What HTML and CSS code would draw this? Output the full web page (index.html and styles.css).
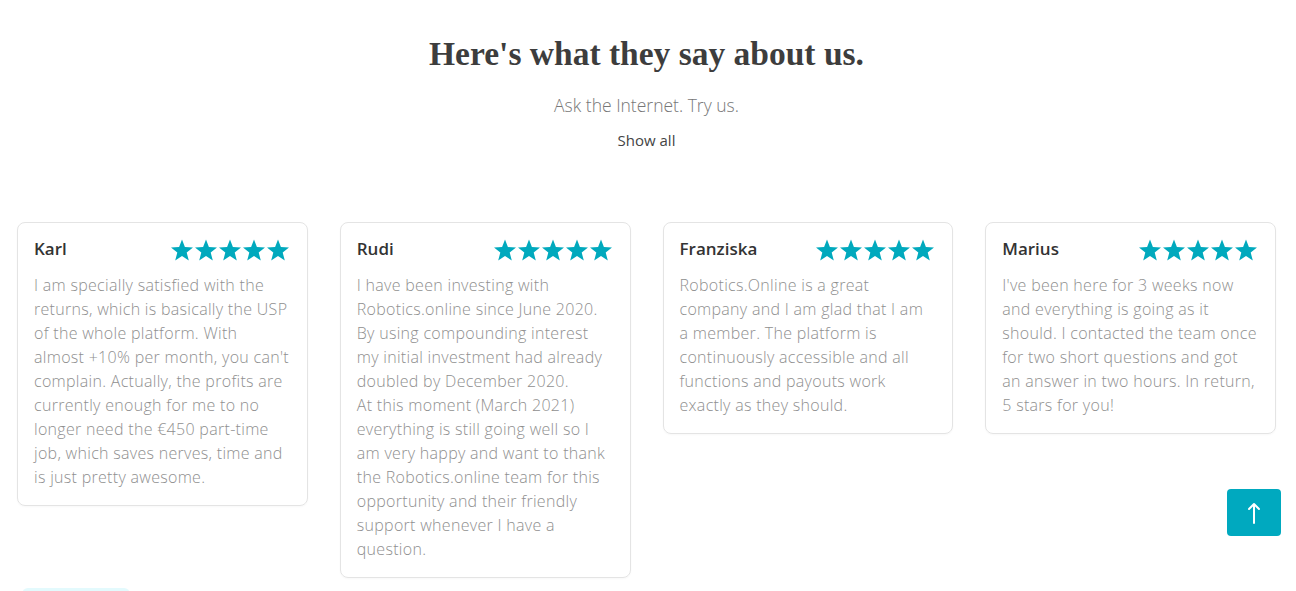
FILE: index.html
```html
<!DOCTYPE html>
<html lang="en">
  <head>
    <meta charset="UTF-8" />
    <meta name="viewport" content="width=device-width, initial-scale=1.0" />
    <title>Testimonials</title>
    <link rel="stylesheet" href="styles.css">
  </head>
  <body>
    <section class="reviews">
      <h2 class="reviews-title">Here's what they say about us.</h2>
      <p class="reviews-sub">Ask the Internet. Try us.</p>
      <a class="reviews-link" href="#">Show all</a>

      <div class="review-grid">
        <div class="review-card">
          <div class="review-head">
            <span class="review-name">Karl</span>
            <span class="stars"></span>
          </div>
          <p class="review-text">I am specially satisfied with the<br>returns, which is basically the USP<br>of the whole platform. With<br>almost +10% per month, you can't<br>complain. Actually, the profits are<br>currently enough for me to no<br>longer need the €450 part-time<br>job, which saves nerves, time and<br>is just pretty awesome.</p>
        </div>
        <div class="review-card">
          <div class="review-head">
            <span class="review-name">Rudi</span>
            <span class="stars"></span>
          </div>
          <p class="review-text">I have been investing with<br>Robotics.online since June 2020.<br>By using compounding interest<br>my initial investment had already<br>doubled by December 2020.<br>At this moment (March 2021)<br>everything is still going well so I<br>am very happy and want to thank<br>the Robotics.online team for this<br>opportunity and their friendly<br>support whenever I have a<br>question.</p>
        </div>
        <div class="review-card">
          <div class="review-head">
            <span class="review-name">Franziska</span>
            <span class="stars"></span>
          </div>
          <p class="review-text">Robotics.Online is a great<br>company and I am glad that I am<br>a member. The platform is<br>continuously accessible and all<br>functions and payouts work<br>exactly as they should.</p>
        </div>
        <div class="review-card">
          <div class="review-head">
            <span class="review-name">Marius</span>
            <span class="stars"></span>
          </div>
          <p class="review-text">I've been here for 3 weeks now<br>and everything is going as it<br>should. I contacted the team once<br>for two short questions and got<br>an answer in two hours. In return,<br>5 stars for you!</p>
        </div>
      </div>
      <div class="next-tab"></div>
    </section>

    <a class="to-top" href="#">
      <svg width="14" height="24" viewBox="0 0 14 24" fill="none" stroke="#fff" stroke-width="2" stroke-linecap="round" stroke-linejoin="round">
        <path d="M7 22V3M2 8l5-5 5 5" />
      </svg>
    </a>

    <script>
      // five teal stars per review
      var star = '<svg width="24" height="24" viewBox="0 0 24 24"><path fill="#00a9bd" d="M12 1.5l2.9 7.6 8.1.4-6.3 5.1 2.1 7.9L12 18l-6.8 4.5 2.1-7.9L1 9.5l8.1-.4z"/></svg>';
      document.querySelectorAll(".stars").forEach(function (el) {
        el.innerHTML = star.repeat(5);
      });
    </script>
  </body>
</html>
```

FILE: styles.css
```css
body {
  margin: 0;
  font-family: "Open Sans", sans-serif;
  color: #333;
  background: #fff;
  overflow: hidden;
}
.reviews {
  padding: 30px 20px 0 17px;
  text-align: center;
}
.reviews-title {
  font-family: "Liberation Serif", serif;
  font-weight: bold;
  font-size: 33.5px;
  line-height: 48px;
  color: #3d3d3d;
  margin: 0;
}
.reviews-sub {
  font-size: 17.5px;
  font-weight: 300;
  color: #777;
  margin: 15px 0 0;
  line-height: 25px;
}
.reviews-link {
  display: inline-block;
  margin-top: 11px;
  font-size: 15px;
  line-height: 22px;
  color: #444;
  text-decoration: none;
}
.review-grid {
  display: grid;
  grid-template-columns: repeat(4, 1fr);
  gap: 32px;
  align-items: start;
  margin-top: 71px;
  text-align: left;
}
.review-card {
  border: 1px solid #e4e4e4;
  border-radius: 8px;
  padding: 11px 16px 16px;
  box-shadow: 0 1px 2px rgba(0, 0, 0, 0.03);
}
.review-head {
  display: flex;
  justify-content: space-between;
  align-items: center;
  height: 28px;
}
.review-name {
  font-weight: 600;
  font-size: 17px;
  color: #333;
}
.stars {
  display: flex;
  margin-right: 1px;
  margin-top: 3px;
}
.review-text {
  margin: 11px 0 0;
  font-size: 16px;
  font-weight: 300;
  letter-spacing: 0.3px;
  line-height: 24px;
  color: #8f8f8f;
  white-space: nowrap;
}
.next-tab {
  width: 108px;
  height: 6px;
  margin: 10px 0 0 5px;
  background: #e3fafd;
  border-radius: 6px 6px 0 0;
}
.to-top {
  position: fixed;
  right: 15px;
  top: 489px;
  width: 54px;
  height: 47px;
  background: #00a9bf;
  border-radius: 4px;
  display: flex;
  align-items: center;
  justify-content: center;
}
```
